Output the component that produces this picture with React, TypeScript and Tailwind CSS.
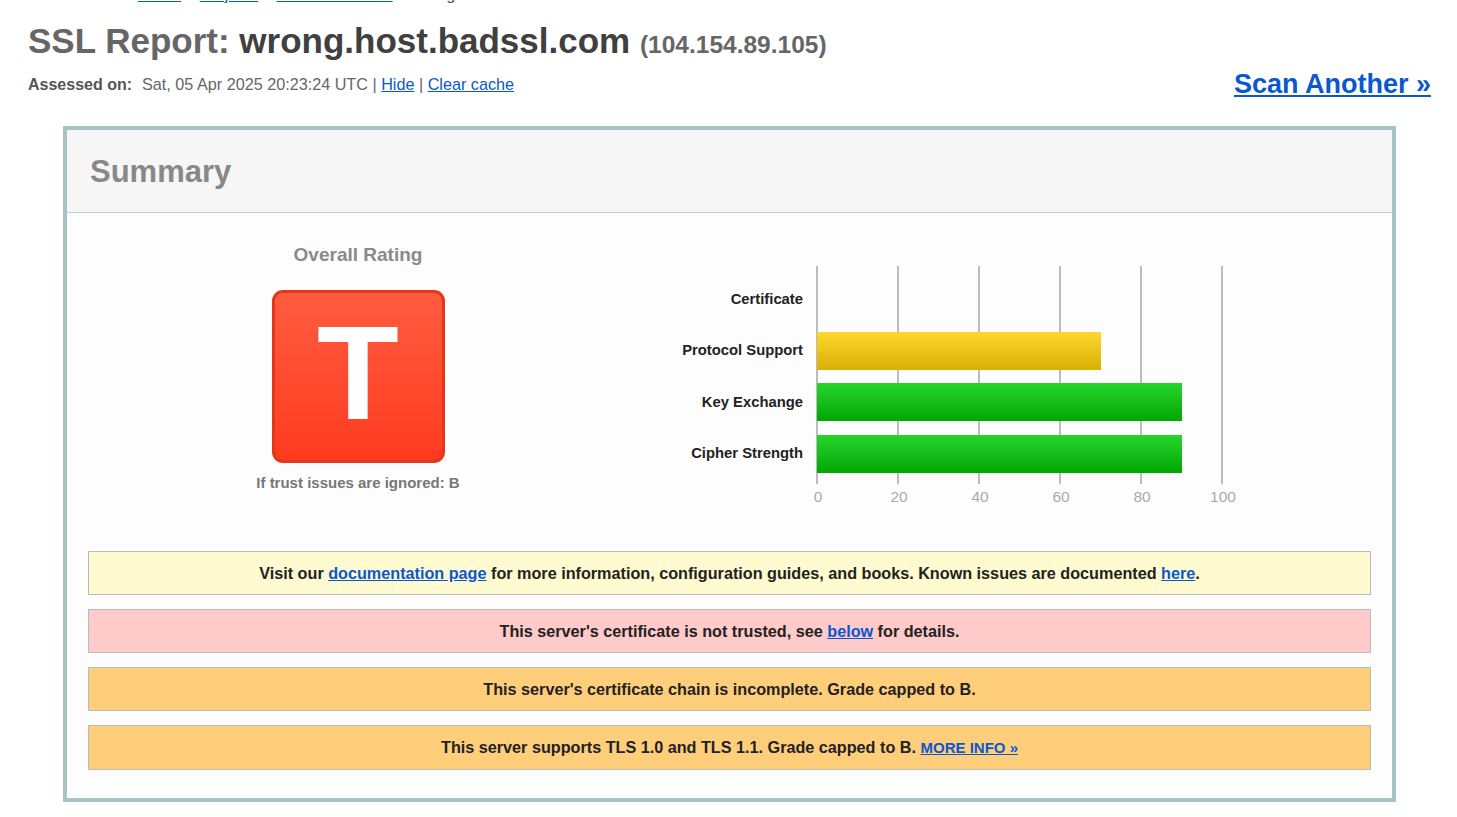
const ratings = [
  { label: "Certificate", value: 0, color: "" },
  { label: "Protocol Support", value: 70, color: "bg-gradient-to-b from-[#ffd72c] to-[#d9af00]" },
  { label: "Key Exchange", value: 90, color: "bg-gradient-to-b from-[#25d52c] to-[#00a700]" },
  { label: "Cipher Strength", value: 90, color: "bg-gradient-to-b from-[#25d52c] to-[#00a700]" },
]

const ticks = [0, 20, 40, 60, 80, 100]

function RatingChart() {
  return (
    <div className="flex">
      {/* row labels */}
      <div className="w-[150px] pt-[14px] pr-[14px] flex flex-col gap-[13.5px]">
        {ratings.map((r) => (
          <div
            key={r.label}
            className="h-[38px] flex items-center justify-end text-[14.8px] font-bold text-[#222] whitespace-nowrap"
          >
            {r.label}
          </div>
        ))}
      </div>
      <div>
        <div className="relative w-[405px] h-[218px] pt-[14px] flex flex-col gap-[13.5px]">
          {ticks.map((t, i) => (
            <div
              key={t}
              className="absolute top-0 bottom-0 w-[2px] bg-[#bcbcbc]"
              style={{ left: i * 81 - 1 }}
            />
          ))}
          {ratings.map((r) => (
            <div key={r.label} className="relative h-[38px]">
              {r.value > 0 && (
                <div className={`h-full ${r.color}`} style={{ width: `${r.value}%` }} />
              )}
            </div>
          ))}
        </div>
        <div className="relative w-[405px] h-[18px] mt-[4px]">
          {ticks.map((t, i) => (
            <span
              key={t}
              className="absolute top-0 w-[40px] -ml-[19px] text-center text-[15.5px] leading-[18px] text-[#aaaaaa]"
              style={{ left: i * 81 }}
            >
              {t}
            </span>
          ))}
        </div>
      </div>
    </div>
  )
}

function Notice({ bg, children }: { bg: string; children: React.ReactNode }) {
  return (
    <div
      className={`border border-[#bbbbbb] ${bg} py-[12px] text-center text-[16.2px] leading-[18px] font-bold text-[#222]`}
    >
      {children}
    </div>
  )
}

export default function App() {
  return (
    <div className="min-h-[817px] bg-white font-['Liberation_Sans',Arial,sans-serif] overflow-hidden">
      {/* breadcrumb, scrolled mostly out of view */}
      <div className="-mt-[16px] h-[20px] pl-[28px] text-[16.2px] leading-[20px] text-[#555] whitespace-nowrap">
        <span className="inline-block w-[110px]">You are here:</span>
        <a href="#" className="text-[#0a58d0] underline">Home</a>
        {" > "}
        <a href="#" className="text-[#0a58d0] underline">Projects</a>
        {" > "}
        <a href="#" className="text-[#0a58d0] underline">SSL Server Test</a>
        {" > "}
        <span>wrong.host.badssl.com</span>
      </div>

      {/* page header */}
      <div className="mt-[17px] pl-[28px] pr-[26px] flex justify-between items-start">
        <div>
          <h1 className="text-[35px] leading-[40px] font-bold text-[#666] whitespace-nowrap">
            SSL Report: <span className="text-[#404040]">wrong.host.badssl.com</span>{" "}
            <span className="text-[24.5px] text-[#666]">(104.154.89.105)</span>
          </h1>
          <div className="mt-[9px] text-[16.2px] leading-[20px] text-[#666] whitespace-nowrap">
            <b className="text-[16px] text-[#555]">Assessed on:</b>
            <span className="ml-[10px]">Sat, 05 Apr 2025 20:23:24 UTC | </span>
            <a href="#" className="text-[#0a58d0] underline">Hide</a>
            {" | "}
            <a href="#" className="text-[#0a58d0] underline">Clear cache</a>
          </div>
        </div>
        <a
          href="#"
          className="mt-[47px] text-[27px] leading-[32px] font-bold text-[#0a58d0] underline whitespace-nowrap"
        >
          Scan Another »
        </a>
      </div>

      {/* summary box */}
      <div className="mt-[26px] ml-[63px] w-[1333px] border-[4px] border-[#a7c3c5]">
        <div className="bg-[#f6f6f6] border-b border-[#b9d0d1] pl-[23px] pt-[24px] pb-[22px]">
          <h2 className="text-[31px] leading-[36px] font-bold text-[#888]">Summary</h2>
        </div>
        <div className="bg-[#fdfdfd] px-[21px] pt-[30px] pb-[28px]">
          <div className="h-[308px] flex items-start">
            {/* overall rating */}
            <div className="w-[540px] flex flex-col items-center">
              <div className="mt-[1px] text-[19px] leading-[22px] font-bold text-[#8a8a8a]">Overall Rating</div>
              <div className="mt-[24px] w-[173px] h-[173px] rounded-[11px] border-[3px] border-[#e4361b] bg-gradient-to-b from-[#ff5b3f] to-[#ff3a1e] flex items-center justify-center pb-[8px]">
                <span className="text-[134px] leading-none font-bold text-white">T</span>
              </div>
              <div className="mt-[11px] text-[15px] leading-[17px] font-bold text-[#777]">
                If trust issues are ignored: B
              </div>
            </div>
            {/* chart */}
            <div className="ml-[39px] mt-[23px]">
              <RatingChart />
            </div>
          </div>

          <div className="flex flex-col gap-[14px]">
            <Notice bg="bg-[#fffacf]">
              Visit our{" "}
              <a href="#" className="text-[#0a58d0] underline">documentation page</a> for more
              information, configuration guides, and books. Known issues are documented{" "}
              <a href="#" className="text-[#0a58d0] underline">here</a>.
            </Notice>
            <Notice bg="bg-[#ffcaca]">
              This server's certificate is not trusted, see{" "}
              <a href="#" className="text-[#0a58d0] underline">below</a> for details.
            </Notice>
            <Notice bg="bg-[#ffce7b]">
              This server's certificate chain is incomplete. Grade capped to B.
            </Notice>
            <Notice bg="bg-[#ffce7b]">
              This server supports TLS 1.0 and TLS 1.1. Grade capped to B.{" "}
              <a href="#" className="text-[15px] text-[#0a58d0] underline">MORE INFO »</a>
            </Notice>
          </div>
        </div>
      </div>
    </div>
  )
}
